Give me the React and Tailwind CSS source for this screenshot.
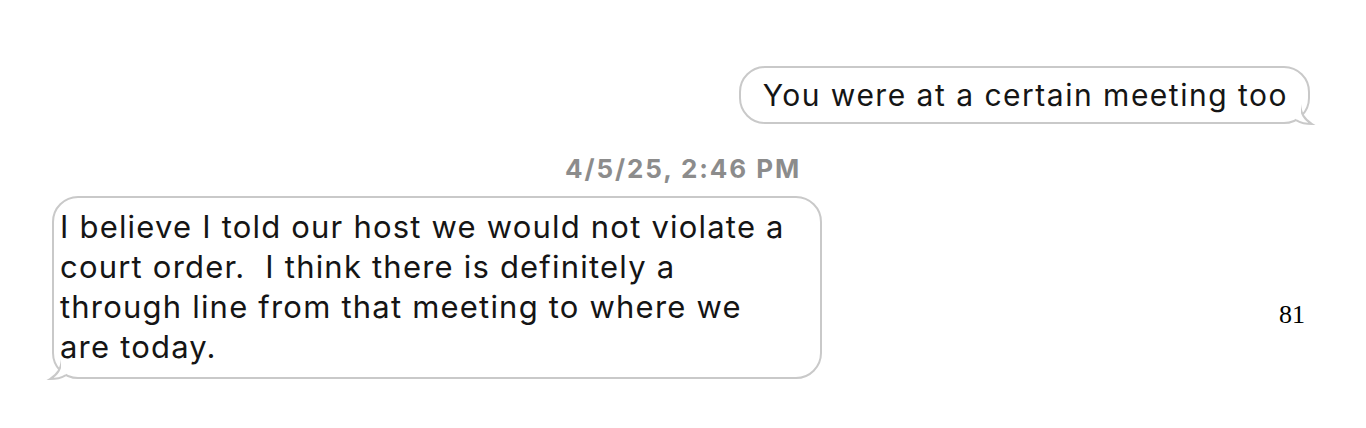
export default function App() {
  return (
    <div className="w-[1366px] h-[428px] bg-white font-['Inter','Liberation_Sans',sans-serif] text-[#151515] overflow-hidden">
      {/* outgoing */}
      <div className="flex justify-end pt-[66px] pr-[56px]">
        <div className="relative rounded-[26px] border-2 border-[#c9c9c9] bg-white pl-[22px] pr-[20px] pt-[9px] pb-[9px] text-[30px] leading-[36px] tracking-[1.5px]">
          You were at a certain meeting too
          <svg className="absolute -right-[10px] -bottom-[4px]" width="22" height="22" viewBox="0 0 22 22">
            <path d="M4 0 C5 10 8 15 16 20 C10 20 5 19 0 16" fill="white" stroke="#c9c9c9" strokeWidth="2" />
            <rect x="0" y="0" width="5" height="15" fill="white" />
          </svg>
        </div>
      </div>

      {/* timestamp */}
      <div className="mt-[30px] text-center text-[26px] leading-[30px] font-bold text-[#8c8c8c] tracking-[1.9px]">
        4/5/25, 2:46 PM
      </div>

      {/* incoming */}
      <div className="flex items-start justify-between mt-[12px] pl-[52px] pr-[61px]">
        <div className="relative w-[770px] rounded-[26px] border-2 border-[#c9c9c9] bg-white pl-[6px] pr-[14px] pt-[9px] pb-[10px] text-[31px] leading-[40px] tracking-[1.2px]">
          I believe I told our host we would not violate a
          <br />
          court order.&nbsp; I think there is definitely a
          <br />
          through line from that meeting to where we
          <br />
          are today.
          <svg className="absolute -left-[10px] -bottom-[4px]" width="22" height="22" viewBox="0 0 22 22">
            <path d="M18 0 C17 10 14 15 6 20 C12 20 17 19 22 16" fill="white" stroke="#c9c9c9" strokeWidth="2" />
            <rect x="17" y="0" width="5" height="15" fill="white" />
          </svg>
        </div>
        <div className="mt-[104px] font-['Liberation_Serif','Times_New_Roman',serif] text-[26px] leading-[30px] text-black">
          81
        </div>
      </div>
    </div>
  );
}
